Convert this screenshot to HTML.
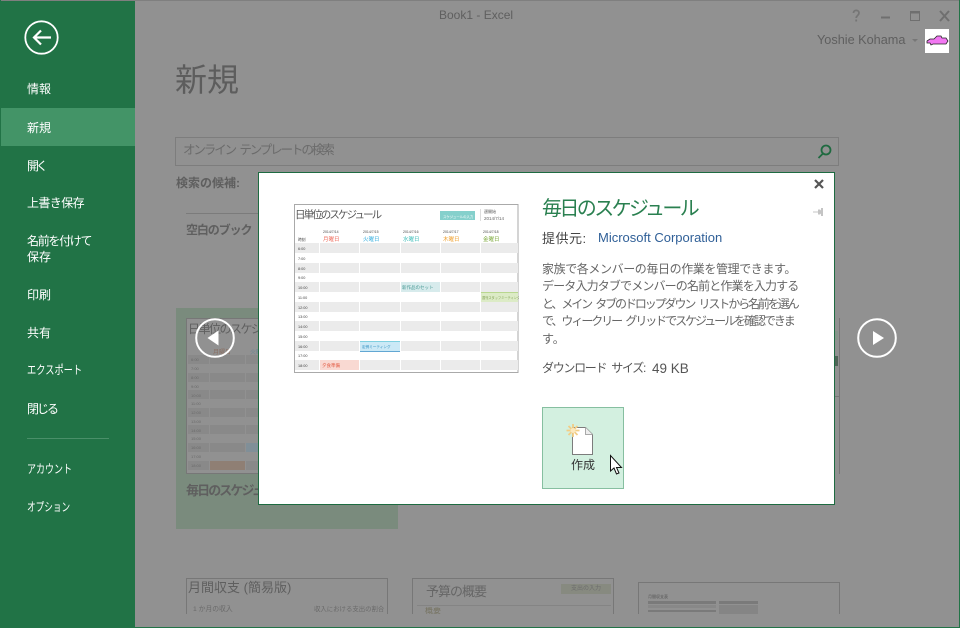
<!DOCTYPE html>
<html lang="ja"><head><meta charset="utf-8"><title>Book1 - Excel</title>
<style>
html,body{margin:0;padding:0;width:960px;height:628px;overflow:hidden;background:#919191;font-family:"Liberation Sans","Noto Sans CJK JP",sans-serif}
*{box-sizing:border-box}
.a{position:absolute;white-space:nowrap}
#side{position:absolute;left:1px;top:1px;width:134px;height:626px;background:#217346}
#sel{position:absolute;left:1px;top:108px;width:134px;height:38px;background:#439467}
.m{position:absolute;left:27px;color:#fff;font-size:12px;line-height:16px;white-space:nowrap;transform-origin:left center}
.bg{color:#5f5f5f}
.d{color:#666;font-size:12px;line-height:17.4px;white-space:nowrap;word-spacing:3px}
.d span{display:block}
</style></head><body>
<div class="a" style="left:0;top:0;width:960px;height:1px;background:#7f7f7f"></div>
<div class="a" style="left:0;top:0;width:1px;height:628px;background:#217346"></div>
<div class="a" style="left:0;top:627px;width:960px;height:1px;background:#217346"></div>
<div class="a" style="left:959px;top:0;width:1px;height:628px;background:#217346"></div>
<div id="side"></div><div id="sel"></div>
<svg class="a" style="left:24px;top:20px" width="36" height="36" viewBox="0 0 36 36" fill="none" stroke="#fff"><circle cx="17.5" cy="17.5" r="16.2" stroke-width="1.8"/><path d="M27 17.5H10M17 10.5L10 17.5L17 24.5" stroke-width="2.2"/></svg>
<div class="m" style="top:81px">情報</div>
<div class="m" style="top:120px">新規</div>
<div class="m" style="top:158px;letter-spacing:-3px">開く</div>
<div class="m" style="top:195px;letter-spacing:-.6px">上書き保存</div>
<div class="m" style="top:233px;letter-spacing:-1.3px">名前を付けて<br><span style="letter-spacing:0">保存</span></div>
<div class="m" style="top:287px">印刷</div>
<div class="m" style="top:325px">共有</div>
<div class="m" style="top:362px;transform:scaleX(.77)">エクスポート</div>
<div class="m" style="top:401px;letter-spacing:-2px">閉じる</div>
<div class="a" style="left:27px;top:438px;width:82px;height:1px;background:#4a8f69"></div>
<div class="m" style="top:461px;transform:scaleX(.75)">アカウント</div>
<div class="m" style="top:499px;transform:scaleX(.72)">オプション</div>

<div class="a bg" style="left:439px;top:8px;font-size:12px;line-height:15px">Book1 - Excel</div>
<svg class="a" style="left:850px;top:8px" width="100" height="16" viewBox="0 0 100 16" fill="none" stroke="#6f6f6f"><path d="M3.5 5C3.5 1.5 9 1.5 9 5C9 7.5 6.2 7.5 6.2 10M6.2 11.5V13.5" stroke-width="1.8" stroke="#757575"/><path d="M31 9.5H40" stroke-width="2"/><rect x="60.5" y="3.5" width="9" height="9" stroke-width="1"/><path d="M60 4.5H70" stroke-width="2"/><path d="M90 3L99 13M99 3L90 13" stroke-width="2"/></svg>
<div class="a bg" style="left:817px;top:33px;font-size:12.7px;line-height:15px">Yoshie Kohama</div>
<div class="a" style="left:912px;top:39px;border-left:3px solid transparent;border-right:3px solid transparent;border-top:3px solid #777"></div>
<div class="a" style="left:925px;top:29px;width:24px;height:24px;background:#fff"></div>
<svg class="a" style="left:925px;top:29px" width="24" height="24" viewBox="0 0 24 24"><path d="M2 12L5 10H9L12 7H16L17 9H21L23 12L21 15H8L6 16L5 14L2 14Z" fill="#f277f2" stroke="#222" stroke-width=".8"/></svg>

<div class="a" style="left:175px;top:59px;font-size:32px;line-height:42px;color:#5d5d5d">新規</div>
<div class="a" style="left:175px;top:137px;width:664px;height:29px;border:1px solid #7d7d7d"></div>
<div class="a" style="left:183px;top:142px;font-size:12.5px;letter-spacing:-2.1px;word-spacing:3px;line-height:17px;color:#6b6b6b">オンライン テンプレートの検索</div>
<svg class="a" style="left:816px;top:143px" width="18" height="18" viewBox="0 0 18 18" fill="none" stroke="#1f6a40" stroke-width="1.8"><circle cx="10" cy="7" r="4.5"/><path d="M7 10.5L2.5 15"/></svg>
<div class="a" style="left:176px;top:175px;font-size:12px;font-weight:bold;line-height:16px;color:#5f5f5f">検索の候補:</div>
<div class="a" style="left:186px;top:213px;width:72px;height:1px;background:#7b7b7b"></div>
<div class="a" style="left:186px;top:222px;font-size:12px;letter-spacing:-1.1px;font-weight:bold;line-height:16px;color:#5f5f5f">空白のブック</div>

<div class="a" style="left:176px;top:308px;width:222px;height:221px;background:#7a8b7d"></div>
<svg class="a" style="left:186px;top:318px" width="90" height="156" viewBox="0 0 90 156"><rect x=".5" y=".5" width="89" height="155" fill="#919191" stroke="#777"/><g fill="#898989"><rect x="2" y="37" width="88" height="9"/><rect x="2" y="55" width="88" height="9"/><rect x="2" y="72" width="88" height="9"/><rect x="2" y="90" width="88" height="9"/><rect x="2" y="107" width="88" height="9"/><rect x="2" y="125" width="88" height="9"/><rect x="2" y="143" width="88" height="9"/></g><g fill="#919191"><rect x="23" y="37" width="1" height="115"/><rect x="59" y="37" width="1" height="115"/></g><rect x="24" y="143" width="35" height="9" fill="#8f7f74"/><rect x="60" y="125" width="30" height="9" fill="#808f98"/><g font-size="4" fill="#6a6a6a" font-family="Liberation Sans,sans-serif"><text x="5" y="43">6:00</text><text x="5" y="52">7:00</text><text x="5" y="61">8:00</text><text x="5" y="70">9:00</text><text x="5" y="79">10:00</text><text x="5" y="87">11:00</text><text x="5" y="96">12:00</text><text x="5" y="105">13:00</text><text x="5" y="114">14:00</text><text x="5" y="122">15:00</text><text x="5" y="131">16:00</text><text x="5" y="140">17:00</text><text x="5" y="149">18:00</text></g><text x="27" y="36" font-size="6" fill="#8a6f62" font-family="Liberation Sans,Noto Sans CJK JP,sans-serif">月曜日</text><text x="64" y="36" font-size="6" fill="#6b8795" font-family="Liberation Sans,Noto Sans CJK JP,sans-serif">火曜日</text></svg>
<div class="a" style="left:188px;top:322px;font-size:12px;letter-spacing:-1.5px;line-height:14px;color:#5f5f5f">日単位のスケジュー</div>
<div class="a" style="left:186px;top:482px;font-size:13px;letter-spacing:-1.9px;font-weight:bold;line-height:18px;color:#5f5f5f">毎日のスケジュ</div>

<div class="a" style="left:186px;top:578px;width:202px;height:36px;border:1px solid #777;border-bottom:0"></div>
<div class="a" style="left:188px;top:579px;font-size:13px;line-height:17px;color:#5f5f5f">月間収支 (簡易版)</div>
<div class="a" style="left:193px;top:604px;font-size:6.8px;line-height:12px;color:#6a6a6a">1 か月の収入</div>
<div class="a" style="left:314px;top:604px;font-size:6.4px;line-height:12px;color:#6a6a6a">収入における支出の割合</div>
<div class="a" style="left:412px;top:578px;width:202px;height:36px;border:1px solid #777;border-bottom:0"></div>
<div class="a" style="left:426px;top:583px;font-size:13px;letter-spacing:-1px;line-height:18px;color:#666">予算の概要</div>
<div class="a" style="left:561px;top:584px;width:50px;height:10px;background:#878a80;color:#6d6d6d;font-size:6px;line-height:10px;text-align:center">支出の入力</div>
<div class="a" style="left:417px;top:605px;width:194px;height:1px;background:#848484"></div>
<div class="a" style="left:425px;top:607px;font-size:8px;line-height:7px;height:7px;overflow:hidden;color:#777462">概要</div>
<div class="a" style="left:638px;top:582px;width:202px;height:32px;border:1px solid #777;border-bottom:0"></div>
<svg class="a" style="left:638px;top:594px" width="130" height="20" viewBox="0 0 130 20"><rect x="10" y="7" width="68" height="3" fill="#7a7a7a"/><rect x="10" y="11" width="68" height="3" fill="#888"/><rect x="10" y="16" width="68" height="2" fill="#7a7a7a"/><rect x="81" y="7" width="39" height="3" fill="#7a7a7a"/><rect x="81" y="11" width="39" height="9" fill="#858585"/></svg>
<div class="a" style="left:648px;top:594px;font-size:4px;line-height:6px;color:#555">月間収支表</div>
<div class="a" style="left:839px;top:318px;width:1px;height:156px;background:#777"></div>
<div class="a" style="left:835px;top:396px;width:4px;height:1px;background:#777"></div>
<div class="a" style="left:835px;top:331px;width:3px;height:9px;background:#86948a"></div>
<div class="a" style="left:835px;top:356px;width:3px;height:10px;background:#4f6457"></div>

<svg class="a" style="left:195px;top:318px" width="40" height="40" viewBox="0 0 40 40" fill="none"><circle cx="20" cy="20" r="18.8" stroke="#fff" stroke-width="2"/><path d="M12.5 20L23.5 12.5V27.5Z" fill="#fff"/></svg>
<svg class="a" style="left:857px;top:318px" width="40" height="40" viewBox="0 0 40 40" fill="none"><circle cx="20" cy="20" r="18.8" stroke="#fff" stroke-width="2"/><path d="M16 13L27 20L16 27Z" fill="#fff"/></svg>

<div class="a" style="left:258px;top:172px;width:577px;height:333px;background:#fff;border:1px solid #1d6b41"></div>
<svg class="a" style="left:294px;top:204px" width="225" height="170" viewBox="0 0 225 170">
<rect x=".5" y=".5" width="223.5" height="168" fill="#fff" stroke="#aaa"/>
<g fill="#ebebeb"><rect x="1" y="39" width="223" height="10"/><rect x="1" y="59" width="223" height="10"/><rect x="1" y="78" width="223" height="10"/><rect x="1" y="98" width="223" height="10"/><rect x="1" y="117" width="223" height="10"/><rect x="1" y="137" width="223" height="10"/><rect x="1" y="156" width="223" height="10"/></g>
<rect x="106" y="78" width="40" height="10" fill="#d7ebec"/>
<rect x="186" y="88" width="38" height="10" fill="#dcebc6"/><rect x="186" y="88" width="38" height="1" fill="#b9d78f"/>
<rect x="66" y="137" width="40" height="10" fill="#cbe9f6"/><rect x="66" y="137" width="40" height="1" fill="#7fd0e0"/><rect x="66" y="147" width="40" height="1" fill="#62a7d3"/>
<rect x="26" y="156" width="40" height="10" fill="#f9d9d2"/>
<g fill="#fff"><rect x="25" y="39" width="1" height="128"/><rect x="65" y="39" width="1" height="128"/><rect x="106" y="39" width="1" height="128"/><rect x="146" y="39" width="1" height="128"/><rect x="186" y="39" width="1" height="128"/></g>
<rect x="146" y="7" width="35" height="9" fill="#85d0cc"/><rect x="186" y="5" width="1" height="12" fill="#ddd"/>
<text x="1" y="14" font-size="10.5" letter-spacing="-1.9" fill="#555" font-family="Liberation Sans,Noto Sans CJK JP,sans-serif">日単位のスケジュール</text>
<g font-family="Liberation Sans,Noto Sans CJK JP,sans-serif">
<text x="149" y="14" font-size="3.4" fill="#fff">スケジュールの入力</text>
<text x="190" y="9" font-size="4" fill="#555">週開始</text><text x="190" y="16" font-size="4.5" fill="#666">2014/7/14</text>
<g font-size="3.5" fill="#444"><text x="29" y="29">2014/7/14</text><text x="69" y="29">2014/7/15</text><text x="109" y="29">2014/7/16</text><text x="149" y="29">2014/7/17</text><text x="189" y="29">2014/7/18</text></g>
<g font-size="5.5"><text x="29" y="37" fill="#ee6a5a">月曜日</text><text x="69" y="37" fill="#35aede">火曜日</text><text x="109" y="37" fill="#3dbdb8">水曜日</text><text x="149" y="37" fill="#ef9f2c">木曜日</text><text x="189" y="37" fill="#7aa83a">金曜日</text></g>
<g font-size="3.8" fill="#444"><text x="4" y="37">時刻</text><text x="4" y="46">6:00</text><text x="4" y="56">7:00</text><text x="4" y="66">8:00</text><text x="4" y="75">9:00</text><text x="4" y="85">10:00</text><text x="4" y="95">11:00</text><text x="4" y="105">12:00</text><text x="4" y="114">13:00</text><text x="4" y="124">14:00</text><text x="4" y="134">15:00</text><text x="4" y="144">16:00</text><text x="4" y="153">17:00</text><text x="4" y="163">18:00</text></g>
<text x="108" y="85" font-size="4.5" fill="#4a9a96">新作品のセット</text><text x="188" y="95" font-size="3.2" fill="#7a9a4a">週刊スタッフミーティング</text><text x="68" y="144" font-size="3.6" fill="#2f8fc0">定例ミーティング</text><text x="28" y="163" font-size="4.5" fill="#e25b43">夕食準備</text>
</g></svg>
<div class="a" style="left:542px;top:196px;font-size:20px;letter-spacing:-2.6px;line-height:27px;color:#2a8050">毎日のスケジュール</div>
<svg class="a" style="left:813px;top:178px" width="12" height="12" viewBox="0 0 12 12"><path d="M2 2L10 10M10 2L2 10" stroke="#555" stroke-width="2.2"/></svg>
<svg class="a" style="left:812px;top:206px" width="13" height="12" viewBox="0 0 13 12" fill="#c4c4c4"><path d="M1 5.5H6V6.5H1ZM6 3.5H8L9 4.5V7.5L8 8.5H6ZM9 2H11V10H9Z"/></svg>
<div class="a" style="left:542px;top:230px;font-size:13px;letter-spacing:.5px;line-height:17px;color:#444">提供元:</div>
<div class="a" style="left:598px;top:229px;font-size:13px;line-height:17px;color:#2f5f97">Microsoft Corporation</div>
<div class="a d" style="left:542px;top:261px"><span style="letter-spacing:-.4px">家族で各メンバーの毎日の作業を管理できます。</span><span style="letter-spacing:-.85px">データ入力タブでメンバーの名前と作業を入力する</span><span style="letter-spacing:-2.1px">と、メイン タブのドロップダウン リストから名前を選ん</span><span style="letter-spacing:-2.05px">で、ウィークリー グリッドでスケジュールを確認できま</span><span>す。</span></div>
<div class="a" style="left:542px;top:360px;font-size:12px;letter-spacing:-1.3px;word-spacing:3px;line-height:17px;color:#555">ダウンロード サイズ:</div>
<div class="a" style="left:652px;top:360px;font-size:13.5px;line-height:17px;color:#555">49 KB</div>
<div class="a" style="left:542px;top:407px;width:82px;height:82px;background:#d3f0e0;border:1px solid #86bfa0"></div>
<svg class="a" style="left:564px;top:422px" width="32" height="34" viewBox="0 0 32 34"><path d="M8.5 5.5H21.5L28.5 12.5V32.5H8.5Z" fill="#fff" stroke="#7c7c7c"/><path d="M21.5 5.5V12.5H28.5" fill="#eee" stroke="#a9a9a9"/><g stroke="#f2cd85" stroke-width="1.8"><path d="M9 2V15M2.5 8.5H15.5M4.5 4L13.5 13M13.5 4L4.5 13"/></g><circle cx="9" cy="8.5" r="2.5" fill="#fbe8bd"/></svg>
<div class="a" style="left:571px;top:457px;font-size:12px;line-height:16px;color:#333">作成</div>
<svg class="a" style="left:609px;top:454px" width="16" height="22" viewBox="0 0 16 22"><path d="M1.5 1.5V17L5 14L7.5 20L10 19L7.5 13.5H12.5Z" fill="#fff" stroke="#111" stroke-width="1"/></svg>
</body></html>
